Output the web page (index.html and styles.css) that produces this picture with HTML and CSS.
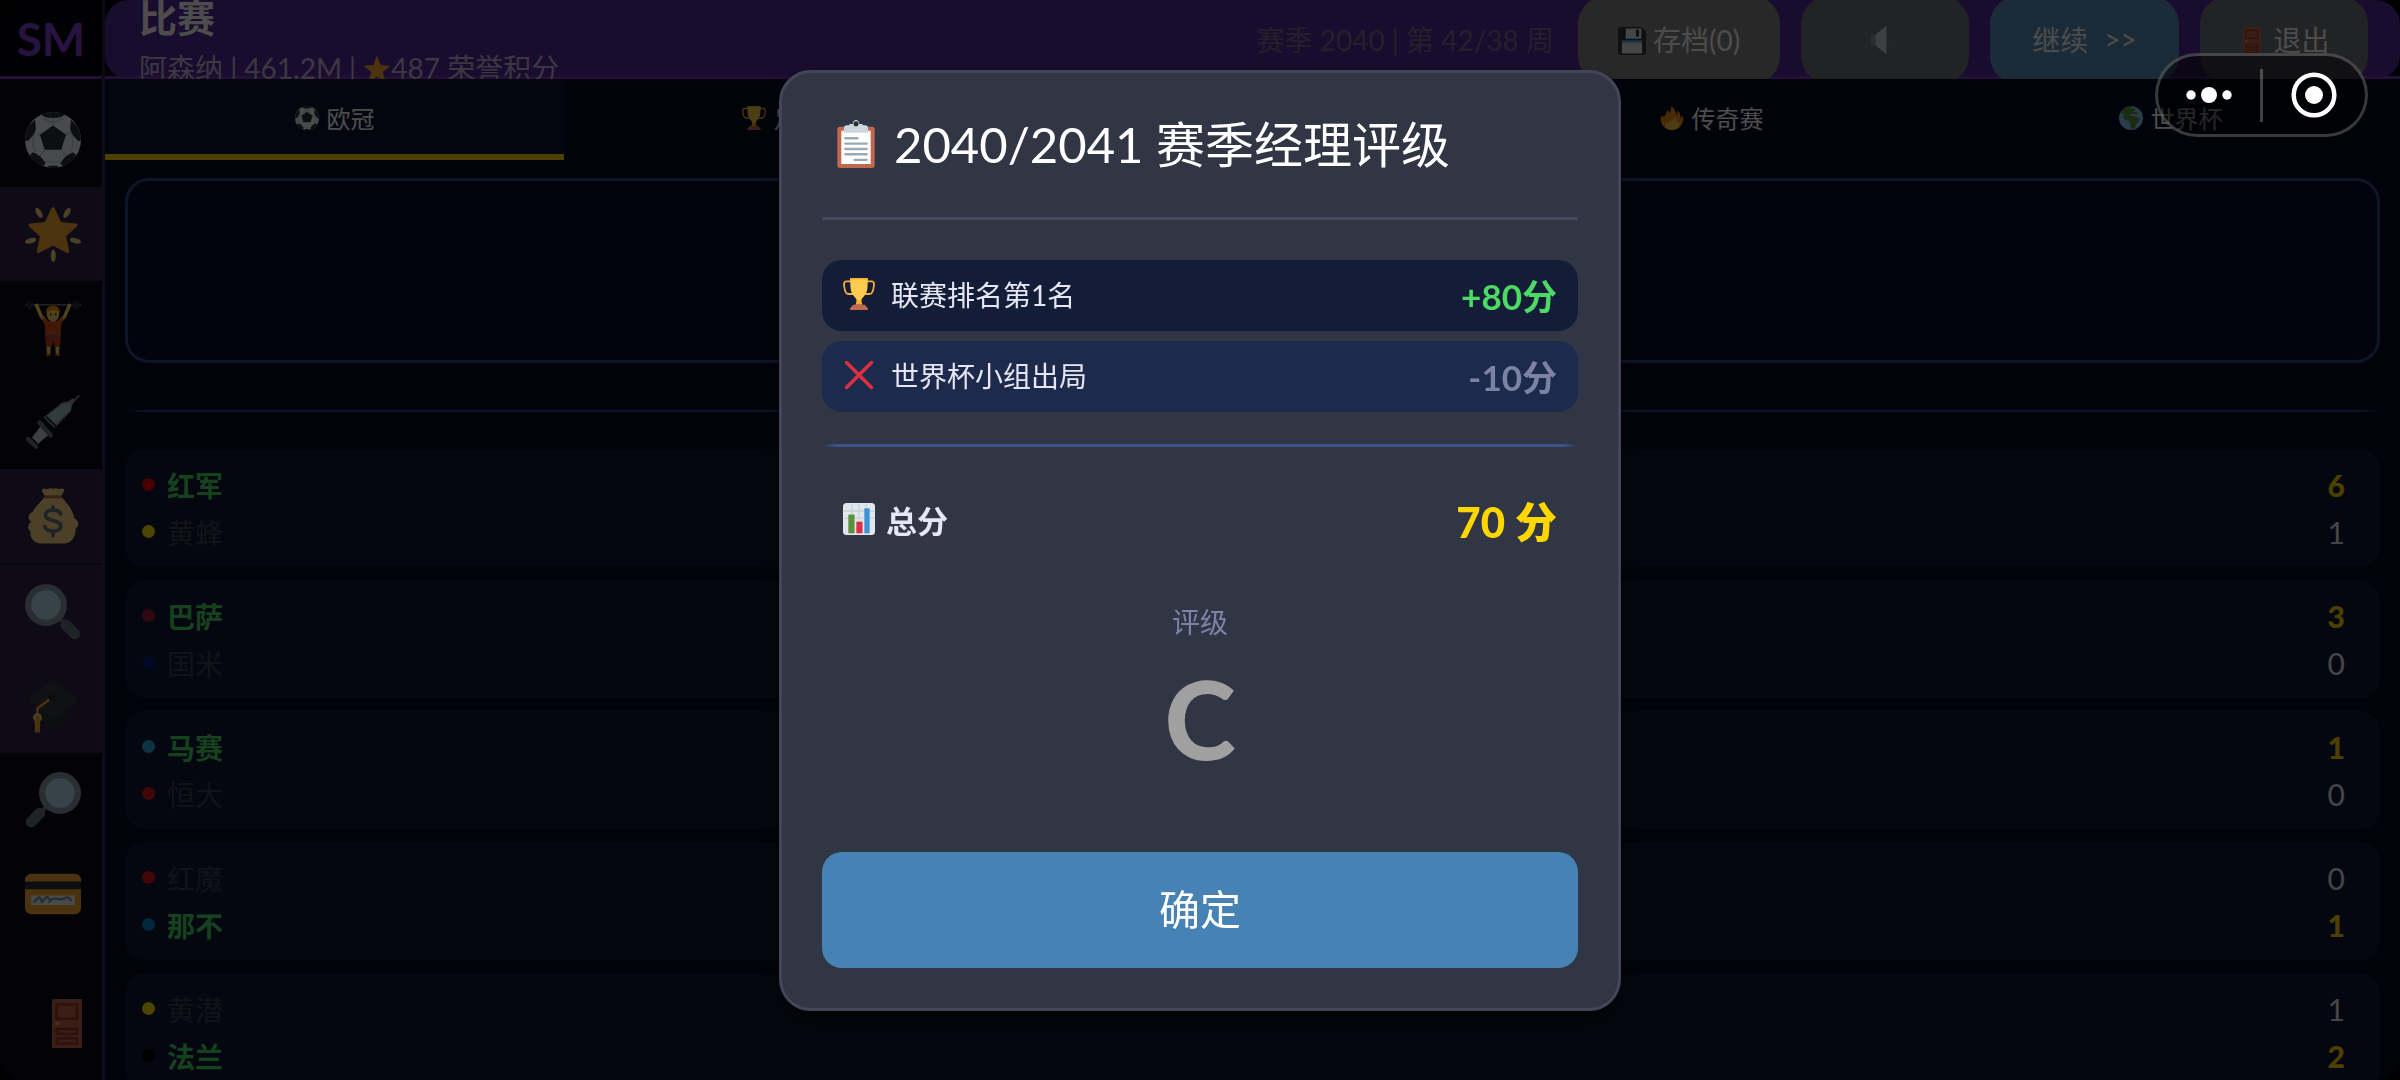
FILE: index.html
```html
<!DOCTYPE html>
<html lang="zh-CN">
  <head>
    <meta charset="utf-8">
    <meta name="viewport" content="width=device-width, initial-scale=1">
    <title>SM - 比赛</title>
    <link rel="stylesheet" href="styles.css">
  </head>
  <body>

    <!-- icon set -->
    <svg class="icon_defs" aria-hidden="true">
      <symbol id="i-ball" viewBox="0 0 36 36">
        <circle cx="18" cy="18" r="18" fill="#F5F8FA"/>
        <g fill="none" stroke="#CCD6DD" stroke-width="1"><path d="M18 9V2M26 15l5-3M23 24l4 5M13 24l-4 5M10 15l-5-3M7 26l-2-5 1-8M29 26l2-5-1-8M12 32h12M11 4l7 3 7-3"/></g>
        <g fill="#292F33"><path d="M18 8.6l8.4 6-3.1 9.6H12.7L9.6 14.6z"/><path d="M10.5 1.6Q18-1.6 25.5 1.6L23.6 3Q18 4.6 12.4 3z"/><path d="M29.5 5Q36 10 36 18.2l-1.7.6Q30 15 29 11z"/><path d="M6.500 5Q0 10 0 18.200l1.700.6Q6 15 7 11z"/><path d="M33 28Q30 33 24.500 34.700l-1.700-1.500Q25 28 31 25.800z"/><path d="M3 28Q6 33 11.500 34.700l1.700-1.500Q11 28 5 25.800z"/><path d="M15 34.500h6v1.300q-3 .5-6 0z"/></g>
      </symbol>
      <symbol id="i-glow" viewBox="0 0 36 36">
        <path fill="#FFAC33" d="M18 .8c.5 0 .9.3 1.200.8l3.900 8.700 9.700.9c1 .1 1.300 1.200.6 1.900l-7 6.400 2 9.300c.2 1-.8 1.700-1.600 1.200L18 25.500 9.200 30c-.8.5-1.800-.2-1.600-1.200l2-9.300-7-6.400c-.7-.7-.4-1.800.6-1.900l9.700-.9 3.900-8.700c.3-.5.700-.8 1.200-.8z"/>
        <g fill="#FFD983"><ellipse cx="9" cy="4.400" rx="1.700" ry="3.600" transform="rotate(-32 9 4.400)"/><ellipse cx="27" cy="4.400" rx="1.700" ry="3.600" transform="rotate(32 27 4.400)"/><ellipse cx="3.600" cy="22.300" rx="1.700" ry="3.700" transform="rotate(75 3.600 22.300)"/><ellipse cx="32.400" cy="22.300" rx="1.700" ry="3.700" transform="rotate(-75 32.400 22.300)"/><ellipse cx="18.200" cy="32" rx="1.600" ry="4"/></g>
      </symbol>
      <symbol id="i-lift" viewBox="0 0 36 36">
        <path fill="#66757F" d="M0 2.600h36v1H0z"/>
        <g fill="#292F33"><path d="M2 .5h2v5.600H2zM.5 1.800h5v3h-5zM32 .5h2v5.600h-2zM30.500 1.800h5v3h-5z"/></g>
        <g fill="none" stroke="#FFDC5D" stroke-width="2.300" stroke-linecap="round"><path d="M7.500 3.500l3 7 4.500 5M28.500 3.500l-3 7-4.500 5"/></g>
        <path fill="#DD551F" d="M11 11l4 2.500h6l4-2.500-2 6v7H13v-7z"/>
        <path fill="#D0421A" d="M13 24h10l-.5 6h-3.500L18.500 26 17 30h-3.500z"/>
        <path fill="#7A5C6E" d="M13 22.500h10v1.200H13z"/>
        <path fill="#FFDC5D" d="M13.800 30h2.700l-.3 5h-2zM19.500 30h2.700l-.4 5h-2z"/>
        <path fill="#DD551F" d="M13.500 34.500h3V36h-3zM19.500 34.500h3V36h-3z"/>
        <ellipse cx="18" cy="9" rx="4" ry="4.800" fill="#FFDC5D"/>
        <path fill="#F4900C" d="M13.500 9q-.5-5.500 4.500-5.500T22.500 9Q21 6.500 18 6.500T13.500 9z"/>
        <path fill="#662113" d="M16 8.500h1v1.500h-1zM19.200 8.500h1v1.500h-1z"/>
      </symbol>
      <symbol id="i-syringe" viewBox="0 0 36 36">
        <path d="M35 .8L28 8" stroke="#99AAB5" stroke-width=".9"/>
        <path fill="#8BA6AD" d="M24 5.500l4-.8 2.800-2 1.500 1.300-2.100 3-.6 4L19 22l-7-7z"/>
        <path fill="#BDDDE4" d="M24 7l4-1 1.500 1.500-1 3.500L18.500 20 13 15z" opacity=".55"/>
        <path fill="#CCD6DD" d="M11 19.500l5.500 5.500-8 7L4.500 28z"/>
        <path stroke="#292F33" stroke-width="1.300" d="M13.500 14.500l7.500 7.200"/>
        <g stroke="#66757F" stroke-width="3" stroke-linecap="round"><path d="M9.500 18.500l7 8M2 29l5 4.700"/></g>
        <path stroke="#292F33" stroke-width=".9" d="M23 17.300l1.300 1.300M24.800 15.500l1.300 1.300M26.600 13.700l1.300 1.300"/>
      </symbol>
      <symbol id="i-money" viewBox="0 0 36 36">
        <path fill="#FDD888" d="M13 5.500L11 2.200c-.6-1.500.8-2.300 2.200-1.700 1.500.7 2.300-.8 3.800-.3.800.3 1.500.3 2.300 0 1.400-.5 2.200 1 3.700.3 1.500-.6 2.600.3 2 1.700L23 5.500c4 4 7.800 8.500 8.700 14 3.500 1.500 3 5.500.8 6.500.5 5-3 9.700-7 9.700h-15c-4.500 0-7.500-3-7-7.700-2-1.500-2-4.500.3-6.200-2.300-2.300-1.800-5.500 1.200-6.600C6.500 12 10 9 13 5.500z"/>
        <path fill="#BF6952" d="M12.500 4.700h11v2h-11z"/>
        <path fill="none" stroke="#67757F" stroke-width="2.300" stroke-linecap="round" d="M23 16.800c-1-3.400-9.800-3.600-9.800.5 0 4.500 9.800 2.700 9.800 7.300 0 4.200-9.200 4.200-10.300.2M18 12v1.500M18 28v2.800"/>
      </symbol>
      <symbol id="i-search" viewBox="0 0 36 36">
        <path d="M22 22l4 4" stroke="#66757F" stroke-width="3"/>
        <path d="M26.500 26.500l5.500 5.500" stroke="#66757F" stroke-width="7" stroke-linecap="round"/>
        <circle cx="13.500" cy="13.500" r="11.500" fill="#BBDDF5" stroke="#8899A6" stroke-width="4"/>
      </symbol>
      <symbol id="i-grad" viewBox="0 0 36 36">
        <path fill="#292F33" d="M9 18v8l9 8.500L28.500 26v-9z"/>
        <path fill="#333B40" d="M18 1L1.500 13.500 18 27l16.500-13.500z"/>
        <ellipse cx="18" cy="12.500" rx="3" ry="2.300" fill="#292F33"/>
        <path fill="none" stroke="#FFAC33" stroke-width="1.600" d="M15.500 14L8 19.500V25"/>
        <circle cx="8" cy="25.500" r="2.800" fill="#FFD983"/><path fill="#FFAC33" d="M6.300 26.500h3.400V35H6.300z"/><circle cx="8" cy="25.500" r="1.500" fill="#FFAC33"/>
      </symbol>
      <symbol id="i-card" viewBox="0 0 36 36">
        <rect y="5" width="36" height="26" rx="4" fill="#FFAC33"/>
        <path fill="#292F33" d="M0 10h36v5H0z"/><path fill="#F4F7F9" d="M4 19h28v6H4z"/>
        <path fill="none" stroke="#8899A6" stroke-width="1.600" stroke-linecap="round" d="M6 23q3-4 4-2t1 2q3-4 4-2.500t1 2q2-2 4-1.500t3 .5 3-1 3.500 1.500"/>
      </symbol>
      <symbol id="i-door" viewBox="0 0 22 36">
        <rect width="22" height="36" rx="1" fill="#C1694F"/>
        <g fill="#C1694F" stroke="#933D27" stroke-width="1.800"><path d="M3.300 4h15v10.500h-15zM3.300 22h15v3.700h-15zM3.300 29h15v3.700h-15z"/></g>
        <circle cx="3.800" cy="18" r="1.500" fill="#FFAC33"/>
      </symbol>
      <symbol id="i-star" viewBox="0 0 36 36"><path fill="#FFAC33" d="M18 1l4.700 11.800 12.300.9-9.500 8 3.200 12.800L18 27.800 7.300 34.500l3.200-12.800-9.500-8 12.300-.9z"/></symbol>
      <symbol id="i-cup" viewBox="0 0 36 36">
        <path fill="none" stroke="#FFAC33" stroke-width="2" d="M9 3.800H3.500Q.5 3.800 1.300 9q1 9 4.700 9h6M27 3.800h5.500q3 0 2.200 5.200-1 9-4.700 9h-6"/>
        <path fill="#FFCC4D" d="M8 1h20l-.5 10c-.5 6-3.500 9.500-6.500 12.500l-.5 5.500h-5l-.5-5.500C12 20.500 9 17 8.500 11z"/>
        <path fill="#FFAC33" d="M8 0h20v1.800H8zM16 25h4l2 5h-8z"/>
        <path fill="#C1694F" d="M11.500 30h13l3.500 4v2H8v-2z"/>
      </symbol>
      <symbol id="i-fire" viewBox="0 0 36 36">
        <path fill="#F4900C" d="M35 19c0-2-.3-4-1-6-.5 2.500-1.700 4-3.400 5 1-3.600-1-9-4.500-11 .2 3-.4 5-1.600 6.300C23.500 8 21 2.500 16.800 0c.5 4-.3 7-2.600 10.500C13 8.500 12 7 10.500 6c.2 4.500-3 7.500-4.500 11-1.400-.8-1.600-2.500-1.500-4C2 15.500 1 18 1 20.500 1.500 29.500 9 36 18 36s17-7 17-17z"/>
        <path fill="#FFCC4D" d="M28.400 23.700c-1 1-2 1.500-3 1.400.8-3-1-7-4-9.100.2 3.500-3.400 5-3.400 9-1.500-.8-2-2.500-1.800-4.500-3 1.500-3.700 5-4.200 7-1.200-.5-1.600-2-1.600-3.500C5 29 9 36 18 36s13-6.500 10.400-12.300z"/>
      </symbol>
      <symbol id="i-earth" viewBox="0 0 36 36">
        <circle cx="18" cy="18" r="18" fill="#88C9F9"/>
        <path fill="#5C913B" d="M4 7Q9 1 16 0l4 1-2 3 5-1 2 3-4 3 6 0 1 4-5-1-5-1-2 3 8 2 5 1 2 4-4 5-3 6-3 3-3-2-1-6-2-5-7-2-2-5 3-4-4 1-3-2z"/>
      </symbol>
      <symbol id="i-disk" viewBox="0 0 36 36">
        <path fill="#31373D" d="M4 0h26l6 5v27q0 4-4 4H4q-4 0-4-4V4q0-4 4-4z"/>
        <path fill="#E1E8ED" d="M10 2h20v13H10zM5 18h26v16H5z"/><path fill="#31373D" d="M23 3.500h4v9h-4z"/><path fill="#55ACEE" d="M5 17h26v3H5z"/>
      </symbol>
      <symbol id="i-sound" viewBox="0 0 36 36">
        <path fill="#8899A6" d="M0 11h8v14H0z"/><path fill="#CCD6DD" d="M6 11L18 1q2-1 2 1v32q0 2-2 1L6 25z"/>
        <path fill="none" stroke="#8899A6" opacity=".5" d="M24 10q4 8 0 16M28 6q6 12 0 24"/>
      </symbol>
      <symbol id="i-clip" viewBox="0 0 36 36">
        <rect x="4" y="5" width="28" height="31" rx="2" fill="#C1694F"/><path fill="#FFF" d="M7 8h22v25H7z"/>
        <path fill="#CCD6DD" d="M13 3h2.500Q16 0 18 0t2.500 3H23v1h2q2 0 2 2v3.500H9V6q0-2 2-2h2z"/><circle cx="18" cy="2.800" r="1.900" fill="#292F33"/>
        <path stroke="#99AAB5" stroke-width="1.800" stroke-linecap="round" d="M10 13.700h9M10 17.700h16M10 21.700h16M10 25.700h16M17 29.900h9"/>
      </symbol>
      <symbol id="i-cross" viewBox="0 0 36 36"><path fill="none" stroke="#DD2E44" stroke-width="4" stroke-linecap="round" d="M4 4l28 28M32 4L4 32"/></symbol>
      <symbol id="i-chart" viewBox="0 0 36 36">
        <rect width="36" height="36" rx="4" fill="#E1E8ED"/>
        <path fill="none" stroke="#CCD6DD" stroke-width="2" d="M10 1v34M18 1v34M26 1v34M1 9h34M1 17h34"/>
        <path fill="#5C913B" d="M6 14q0-1 1-1h5q1 0 1 1v20H6z"/><path fill="#DD2E44" d="M15 21h7v13h-7z"/><path fill="#3B94D9" d="M24 7q0-1 1-1h4q1 0 1 1v27h-6z"/>
      </symbol>
    </svg>

    <div class="app">
      <div class="topbar">
        <div class="logo">SM</div>
        <header class="header">
          <div class="header_title">
            <h1>比赛</h1>
            <p>阿森纳 | 461.2M | <svg class="icon_text"><use href="#i-star"/></svg>487 荣誉积分</p>
          </div>
          <div class="header_season">赛季 2040 | 第 42/38 周</div>
          <div class="header_btns">
            <button class="btn btn-save"><svg class="icon_text"><use href="#i-disk"/></svg> 存档(0)</button>
            <button class="btn" aria-label="声音"><svg class="icon_text"><use href="#i-sound"/></svg></button>
            <button class="btn btn-next"><span>继续</span><span>&gt;&gt;</span></button>
            <button class="btn"><svg class="icon_text"><use href="#i-door"/></svg> 退出</button>
          </div>
        </header>
      </div>

      <div class="body">
        <nav class="sidebar">
          <a href="#match" aria-label="比赛"><svg><use href="#i-ball"/></svg></a>
          <a href="#team" class="on" aria-label="球队"><svg><use href="#i-glow"/></svg></a>
          <a href="#train" aria-label="训练"><svg><use href="#i-lift"/></svg></a>
          <a href="#medical" aria-label="医疗"><svg><use href="#i-syringe"/></svg></a>
          <a href="#finance" class="on line" aria-label="财务"><svg><use href="#i-money"/></svg></a>
          <a href="#scout" class="on" aria-label="球探"><svg><use href="#i-search"/></svg></a>
          <a href="#youth" class="on" aria-label="青训"><svg><use href="#i-grad"/></svg></a>
          <a href="#find" aria-label="搜索"><svg class="flip"><use href="#i-search"/></svg></a>
          <a href="#card" aria-label="充值"><svg><use href="#i-card"/></svg></a>
          <a href="#exit" class="exit" aria-label="退出"><svg><use href="#i-door"/></svg></a>
        </nav>

        <main class="main">
          <div class="tabs">
            <button class="tab active"><svg><use href="#i-ball"/></svg>欧冠</button>
            <button class="tab"><svg><use href="#i-cup"/></svg>足总杯</button>
            <button class="tab" aria-label="联赛"></button>
            <button class="tab"><svg><use href="#i-fire"/></svg>传奇赛</button>
            <button class="tab"><svg><use href="#i-earth"/></svg>世界杯</button>
          </div>

          <div class="content">
            <div class="panel"></div>
            <div class="line_fade"></div>

            <div class="match_list">
              <div class="match">
                <div class="team win"><i class="dot red"></i><span>红军</span><b>6</b></div>
                <div class="team"><i class="dot yellow"></i><span>黄蜂</span><b>1</b></div>
              </div>
              <div class="match">
                <div class="team win"><i class="dot wine"></i><span>巴萨</span><b>3</b></div>
                <div class="team"><i class="dot navy"></i><span>国米</span><b>0</b></div>
              </div>
              <div class="match">
                <div class="team win"><i class="dot sky"></i><span>马赛</span><b>1</b></div>
                <div class="team"><i class="dot brick"></i><span>恒大</span><b>0</b></div>
              </div>
              <div class="match">
                <div class="team"><i class="dot brick"></i><span>红魔</span><b>0</b></div>
                <div class="team win"><i class="dot blue"></i><span>那不</span><b>1</b></div>
              </div>
              <div class="match">
                <div class="team"><i class="dot yellow"></i><span>黄潜</span><b>1</b></div>
                <div class="team win"><i class="dot black"></i><span>法兰</span><b>2</b></div>
              </div>
            </div>
          </div>
        </main>
      </div>
    </div>

    <!-- season rating popup -->
    <div class="popup_base">
      <div class="popup" role="dialog" aria-labelledby="popup_title">
        <h2 class="popup_title" id="popup_title"><svg><use href="#i-clip"/></svg>2040/2041 赛季经理评级</h2>
        <div class="rate_list">
          <div class="rate"><svg><use href="#i-cup"/></svg><span>联赛排名第1名</span><b class="plus">+80分</b></div>
          <div class="rate rate-alt"><svg><use href="#i-cross"/></svg><span>世界杯小组出局</span><b class="minus">-10分</b></div>
        </div>
        <div class="popup_line"></div>
        <div class="total"><svg><use href="#i-chart"/></svg><span>总分</span><b>70 分</b></div>
        <div class="grade_label">评级</div>
        <div class="grade">C</div>
        <button class="popup_btn">确定</button>
      </div>
    </div>

    <!-- mini program capsule -->
    <div class="capsule">
      <button aria-label="更多"><svg width="46" height="16" viewBox="0 0 46 16"><g fill="#fff"><circle cx="5" cy="8" r="4.700"/><circle cx="23" cy="8" r="8"/><circle cx="41" cy="8" r="4.700"/></g></svg></button>
      <span class="capsule_line"></span>
      <button aria-label="关闭"><svg width="46" height="46" viewBox="0 0 46 46"><circle cx="23" cy="23" r="20.300" fill="none" stroke="#fff" stroke-width="4.500"/><circle cx="23" cy="23" r="9" fill="#fff"/></svg></button>
    </div>
  </body>
</html>
```
FILE: styles.css
```css
*{
  box-sizing: border-box;
}
html, body{
  margin: 0;
  padding: 0;
  height: 100%;
  background-color: #000;
  font-family: Lato, "Noto Sans CJK SC", sans-serif;
  overflow: hidden;
}
h1, h2, p{
  margin: 0;
  font-weight: normal;
}
button{
  border: none;
  font-family: inherit;
  cursor: pointer;
}
.icon_defs{
  position: absolute;
  width: 0;
  height: 0;
}
.app{
  display: flex;
  flex-direction: column;
  height: 100vh;
  background-color: #030c24;
  border-radius: 24px;
  overflow: hidden;
}

/* top bar */
.topbar{
  flex: none;
  display: flex;
  height: 79px;
  background: linear-gradient(#7832b4, #7832b4) bottom / 100% 3px no-repeat, #05030d;
}
.logo{
  width: 105px;
  padding-bottom: 3px;
  display: flex;
  align-items: center;
  justify-content: center;
  border-right: 3px solid #2c2244;
  color: #8842d8;
  font-size: 46px;
  font-weight: bold;
}
.header{
  flex: 1;
  display: flex;
  align-items: center;
  padding: 0 32px 0 34px;
  background: linear-gradient(#7832b4, #7832b4) bottom / 100% 3px no-repeat, #572b9b;
  border-radius: 24px;
  overflow: hidden;
}
.header_title{
  flex: 1;
  color: #fff;
}
.header_title h1{
  font-size: 38px;
  line-height: 56px;
  font-weight: bold;
}
.header_title p{
  font-size: 28px;
  line-height: 46px;
  color: #c8b8dc;
  white-space: nowrap;
}
.icon_text{
  width: 28px;
  height: 28px;
  vertical-align: -4px;
}
.header_season{
  margin-right: 24px;
  padding-bottom: 2px;
  font-size: 28px;
  color: #7c6a90;
}
.header_btns{
  display: flex;
  gap: 21px;
}
.btn{
  min-width: 168px;
  height: 88px;
  padding: 0 32px 2px;
  border-radius: 28px;
  background-color: #72757d;
  color: #fff;
  font-size: 28px;
}
.btn-save{
  min-width: 202px;
  background-color: #85878b;
}
.btn-next{
  display: flex;
  align-items: center;
  justify-content: center;
  gap: 16px;
  min-width: 189px;
  background-color: #5a90bc;
}

/* side menu */
.body{
  flex: 1;
  display: flex;
  min-height: 0;
}
.sidebar{
  flex: none;
  display: flex;
  flex-direction: column;
  width: 105px;
  padding: 14px 0 10px;
  border-right: 3px solid #32254e;
  background-color: #0a0716;
}
.sidebar a{
  flex: none;
  display: flex;
  align-items: center;
  justify-content: center;
  height: 94px;
  padding-left: 4px;
}
.sidebar a.on{
  background-color: #30234a;
}
.sidebar a.line{
  height: 96px;
  border-bottom: 2px solid #1c1430;
}
.sidebar svg{
  width: 56px;
  height: 56px;
}
.sidebar svg.flip{
  transform: scaleX(-1);
}
.sidebar a.exit{
  justify-content: flex-end;
  margin-top: auto;
  padding-right: 20px;
}
.sidebar a.exit svg{
  width: 30px;
  height: 49px;
}

/* tabs */
.main{
  flex: 1;
  min-width: 0;
}
.tabs{
  display: flex;
}
.tab{
  flex: 1;
  display: flex;
  align-items: center;
  justify-content: center;
  gap: 8px;
  height: 81px;
  padding: 2px 0 0;
  background: none;
  border-bottom: 6px solid transparent;
  color: #fff;
  font-size: 24px;
}
.tab.active{
  background-color: #101732;
  border-color: #ffd700;
}
.tab svg{
  width: 24px;
  height: 24px;
}

/* matches */
.content{
  padding: 18px 20px;
}
.panel{
  height: 185px;
  border: 3px solid #2d4886;
  border-radius: 24px;
  background-color: #080d2b;
}
.line_fade{
  height: 2px;
  margin: 47px 0 37px;
  background: linear-gradient(90deg, transparent, #2d4886 1%, #2d4886 99%, transparent);
}
.match_list{
  display: flex;
  flex-direction: column;
  gap: 13px;
}
.match{
  padding: 12px 35px 12px 17px;
  border-radius: 20px;
  background-color: #101736;
}
.team{
  display: flex;
  align-items: center;
  height: 47px;
  font-size: 28px;
  color: #3e3f52;
}
.team b{
  margin-left: auto;
  font-size: 30px;
  font-weight: normal;
  color: #e8e8f0;
}
.team.win{
  font-weight: bold;
  color: #4cd964;
}
.team.win b{
  font-weight: 900;
  color: #ffd700;
}
.dot{
  width: 13px;
  height: 13px;
  margin-right: 12px;
  border-radius: 50%;
}
.red{ background-color: #f00000; }
.yellow{ background-color: #ffe600; }
.wine{ background-color: #a02040; }
.navy{ background-color: #001c80; }
.sky{ background-color: #2faee0; }
.brick{ background-color: #da1a1a; }
.blue{ background-color: #0087c8; }
.black{ background-color: #000; }

/* popup */
.popup_base{
  position: fixed;
  top: 0;
  left: 0;
  width: 100%;
  height: 100%;
  display: flex;
  align-items: center;
  justify-content: center;
  background-color: rgba(0, 0, 0, .7);
}
.popup{
  width: 842px;
  max-width: 90%;
  padding: 40px;
  border: 3px solid #444559;
  border-radius: 32px;
  background-color: #313644;
  box-shadow: 0 12px 24px rgba(0, 0, 0, .5);
  color: #e6e6f5;
}
.popup_title{
  display: flex;
  align-items: center;
  gap: 14px;
  padding: 0 0 42px 10px;
  border-bottom: 3px solid #47485d;
  color: #fff;
  font-size: 49px;
  line-height: 62px;
}
.popup_title svg{
  width: 48px;
  height: 48px;
}
.rate_list{
  display: flex;
  flex-direction: column;
  gap: 10px;
  margin: 40px 0 32px;
}
.rate, .total{
  display: flex;
  align-items: center;
  gap: 16px;
  height: 71px;
  padding: 0 21px 2px;
  border-radius: 20px;
  font-size: 28px;
}
.rate{
  background-color: #141d37;
}
.rate-alt{
  background-color: #1c2a4b;
}
.rate svg, .total svg{
  width: 32px;
  height: 32px;
}
.rate b, .total b{
  margin-left: auto;
  font-size: 35px;
}
.plus{
  color: #4cd964;
}
.minus{
  color: #7c82a4;
}
.popup_line{
  height: 3px;
  background: linear-gradient(90deg, transparent, #3b5288 2%, #3b5288 98%, transparent);
}
.total{
  gap: 11px;
  margin: 38px 0 46px;
  font-size: 31px;
  font-weight: bold;
}
.total b{
  color: #ffd700;
  font-size: 42px;
}
.grade_label{
  text-align: center;
  font-size: 28px;
  line-height: 40px;
  color: #7c82a8;
}
.grade{
  margin: 16px 0 74px;
  text-align: center;
  font-size: 108px;
  line-height: 120px;
  font-weight: 900;
  color: #a0a0a0;
}
.popup_btn{
  display: block;
  width: 100%;
  height: 116px;
  padding: 0 0 5px;
  border-radius: 20px;
  background-color: #4682b4;
  color: #fff;
  font-size: 41px;
}

/* capsule */
.capsule{
  position: fixed;
  top: 53px;
  right: 32px;
  display: flex;
  align-items: center;
  width: 213px;
  height: 84px;
  border: 3px solid rgba(255, 255, 255, .22);
  border-radius: 42px;
  background-color: rgba(0, 0, 0, .5);
}
.capsule button{
  flex: 1;
  display: flex;
  align-items: center;
  justify-content: center;
  padding: 0;
  background: none;
}
.capsule_line{
  width: 3px;
  height: 53px;
  background-color: rgba(255, 255, 255, .25);
}
```
